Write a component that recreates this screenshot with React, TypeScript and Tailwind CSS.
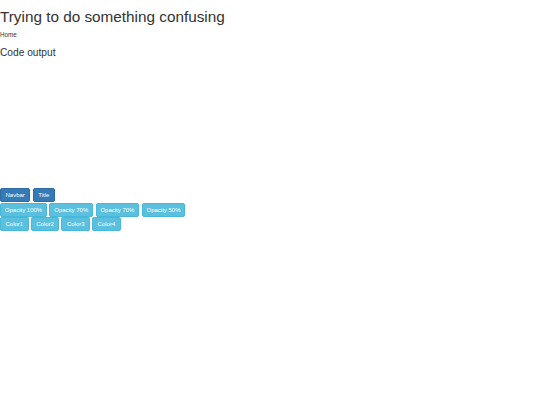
export default function App() {
  const rowA = ["Navbar", "Title"];
  const rowB = ["Opacity 100%", "Opacity 70%", "Opacity 70%", "Opacity 50%"];
  const rowC = ["Color1", "Color2", "Color3", "Color4"];

  return (
    <div className="min-h-[405px] bg-white text-[#333] font-['Liberation_Sans',Arial,sans-serif]">
      <h1 className="pt-[7px] text-[15.3px] leading-[20px]">Trying to do something confusing</h1>
      <p className="mt-[4px] text-[6.3px] leading-[8px]">Home</p>
      <h3 className="mt-[7px] text-[10.2px] leading-[13px]">Code output</h3>

      {/* output area */}
      <div className="h-[129px]" />

      <div className="flex gap-[2.5px]">
        {rowA.map((t) => (
          <button
            key={t}
            className="h-[14px] px-[4.5px] text-[6px] leading-none text-white bg-[#337ab7] border border-[#2e6da4] rounded-[2px]"
          >
            {t}
          </button>
        ))}
      </div>
      <div className="flex gap-[2.5px] mt-[1px]">
        {rowB.map((t, i) => (
          <button
            key={i}
            className="h-[14px] px-[3.8px] text-[6px] leading-none text-white bg-[#5bc0de] border border-[#46b8da] rounded-[2px]"
          >
            {t}
          </button>
        ))}
      </div>
      <div className="flex gap-[2px]">
        {rowC.map((t) => (
          <button
            key={t}
            className="h-[14px] px-[4.5px] text-[6px] leading-none text-white bg-[#5bc0de] border border-[#46b8da] rounded-[2px]"
          >
            {t}
          </button>
        ))}
      </div>
    </div>
  );
}
